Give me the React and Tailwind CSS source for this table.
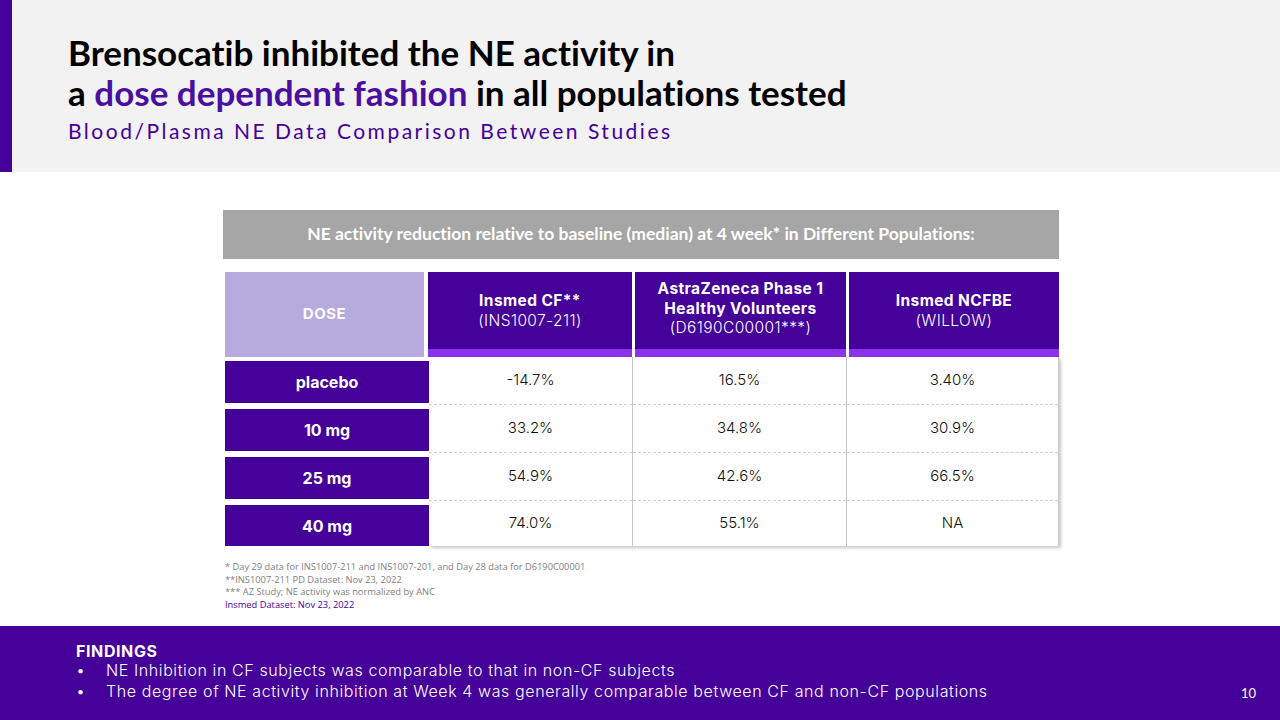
import React from "react";

const rows = [
  ["placebo", "-14.7%", "16.5%", "3.40%"],
  ["10 mg", "33.2%", "34.8%", "30.9%"],
  ["25 mg", "54.9%", "42.6%", "66.5%"],
  ["40 mg", "74.0%", "55.1%", "NA"],
];
const rowH = ["h-[48px]", "h-[48px]", "h-[48px]", "h-[45px]"];

function DataCol({ idx, w }) {
  return (
    <div className={`${w} bg-white border-r border-[#c9c9c9] shadow-[2px_2px_3px_rgba(0,0,0,0.22)] flex flex-col`}>
      {rows.map((r, i) => (
        <div
          key={i}
          className={`${rowH[i]} flex items-center justify-center text-[15px] font-light text-[#111] ${i < 3 ? "border-b border-dashed border-[#cfcfcf]" : ""}`}
        >
          {r[idx]}
        </div>
      ))}
    </div>
  );
}

export default function App() {
  return (
    <div className="w-[1280px] h-[720px] bg-white flex flex-col overflow-hidden" style={{ fontFamily: "Inter, 'Noto Sans', sans-serif" }}>
      {/* Header */}
      <div className="h-[172px] bg-[#f2f2f2] flex shrink-0">
        <div className="w-[12px] bg-[#45009a]" />
        <div className="pl-[56px] pt-[32px] [font-variant-ligatures:none]" style={{ fontFamily: "Lato, 'Open Sans', sans-serif" }}>
          <div className="text-[35px] font-bold leading-[40px] text-black">
            Brensocatib inhibited the NE activity in
          </div>
          <div className="text-[35px] font-bold leading-[40px] text-black">
            a <span className="text-[#4b0fa0]">dose dependent fashion</span> in all populations tested
          </div>
          <div className="mt-[7px] text-[21px] leading-[24px] text-[#45009a] tracking-[2.5px]">
            Blood/Plasma NE Data Comparison Between Studies
          </div>
        </div>
      </div>

      {/* Main */}
      <div className="flex-1 flex flex-col pl-[223px]">
        <div className="mt-[38px] w-[836px] h-[49px] bg-[#a6a6a6] flex items-center justify-center text-white font-bold text-[17.5px] [font-variant-ligatures:none]" style={{ fontFamily: "Lato, 'Open Sans', sans-serif" }}>
          NE activity reduction relative to baseline (median) at 4 week* in Different Populations:
        </div>

        {/* header row */}
        <div className="mt-[13px] flex h-[85px]">
          <div className="ml-[2px] w-[199px] bg-[#b7aade] flex items-center justify-center text-white font-bold text-[15px] tracking-[0.5px]">
            DOSE
          </div>
          <div className="ml-[4px] w-[204px] flex flex-col">
            <div className="flex-1 bg-[#45009a] flex flex-col items-center justify-center text-white text-[15.5px] leading-[20px] text-center tracking-[0.4px]">
              <div className="font-bold">Insmed CF**</div>
              <div className="font-light">(INS1007-211)</div>
            </div>
            <div className="h-[8px] bg-[#8a33ea]" />
          </div>
          <div className="ml-[3px] w-[211px] flex flex-col">
            <div className="flex-1 bg-[#45009a] flex flex-col items-center justify-center text-white text-[15.5px] leading-[19.5px] text-center pb-[4px] tracking-[0.4px]">
              <div className="font-bold">AstraZeneca Phase 1</div>
              <div className="font-bold">Healthy Volunteers</div>
              <div className="font-light">(D6190C00001***)</div>
            </div>
            <div className="h-[8px] bg-[#8a33ea]" />
          </div>
          <div className="ml-[3px] w-[210px] flex flex-col">
            <div className="flex-1 bg-[#45009a] flex flex-col items-center justify-center text-white text-[15.5px] leading-[20px] text-center tracking-[0.4px]">
              <div className="font-bold">Insmed NCFBE</div>
              <div className="font-light">(WILLOW)</div>
            </div>
            <div className="h-[8px] bg-[#8a33ea]" />
          </div>
        </div>

        {/* body */}
        <div className="flex">
          <div className="ml-[2px] w-[204px] flex flex-col pt-[4px] gap-[6px]">
            {rows.map((r, i) => (
              <div
                key={i}
                className={`${i === 3 ? "h-[41px]" : "h-[42px]"} bg-[#45009a] flex items-center justify-center text-white font-bold text-[16px]`}
              >
                {r[0]}
              </div>
            ))}
          </div>
          <DataCol idx={1} w="w-[204px]" />
          <DataCol idx={2} w="w-[214px]" />
          <DataCol idx={3} w="w-[212px]" />
        </div>

        {/* footnotes */}
        <div className="mt-[15px] ml-[2px] text-[9.3px] leading-[12.5px] text-[#7f7f7f]" style={{ fontFamily: "'Open Sans', sans-serif" }}>
          <div>* Day 29 data for INS1007-211 and INS1007-201, and Day 28 data for D6190C00001</div>
          <div>**INS1007-211 PD Dataset: Nov 23, 2022</div>
          <div>*** AZ Study; NE activity was normalized by ANC</div>
          <div className="text-[#45009a]">Insmed Dataset: Nov 23, 2022</div>
        </div>
      </div>

      {/* Footer */}
      <div className="h-[94px] shrink-0 bg-[#45009a] flex items-start text-white relative">
        <div className="pl-[76px] pt-[16px]">
          <div className="font-bold text-[16px] leading-[18px] tracking-[0.6px]">FINDINGS</div>
          <div className="text-[16px] leading-[21px] font-light tracking-[0.6px]">
            <div className="flex"><span className="w-[30px]">•</span><span>NE Inhibition in CF subjects was comparable to that in non-CF subjects</span></div>
            <div className="flex"><span className="w-[30px]">•</span><span>The degree of NE activity inhibition at Week 4 was generally comparable between CF and non-CF populations</span></div>
          </div>
        </div>
        <div className="absolute right-[24px] top-[58px] text-[13px]" style={{ fontFamily: "Lato, sans-serif" }}>10</div>
      </div>
    </div>
  );
}
